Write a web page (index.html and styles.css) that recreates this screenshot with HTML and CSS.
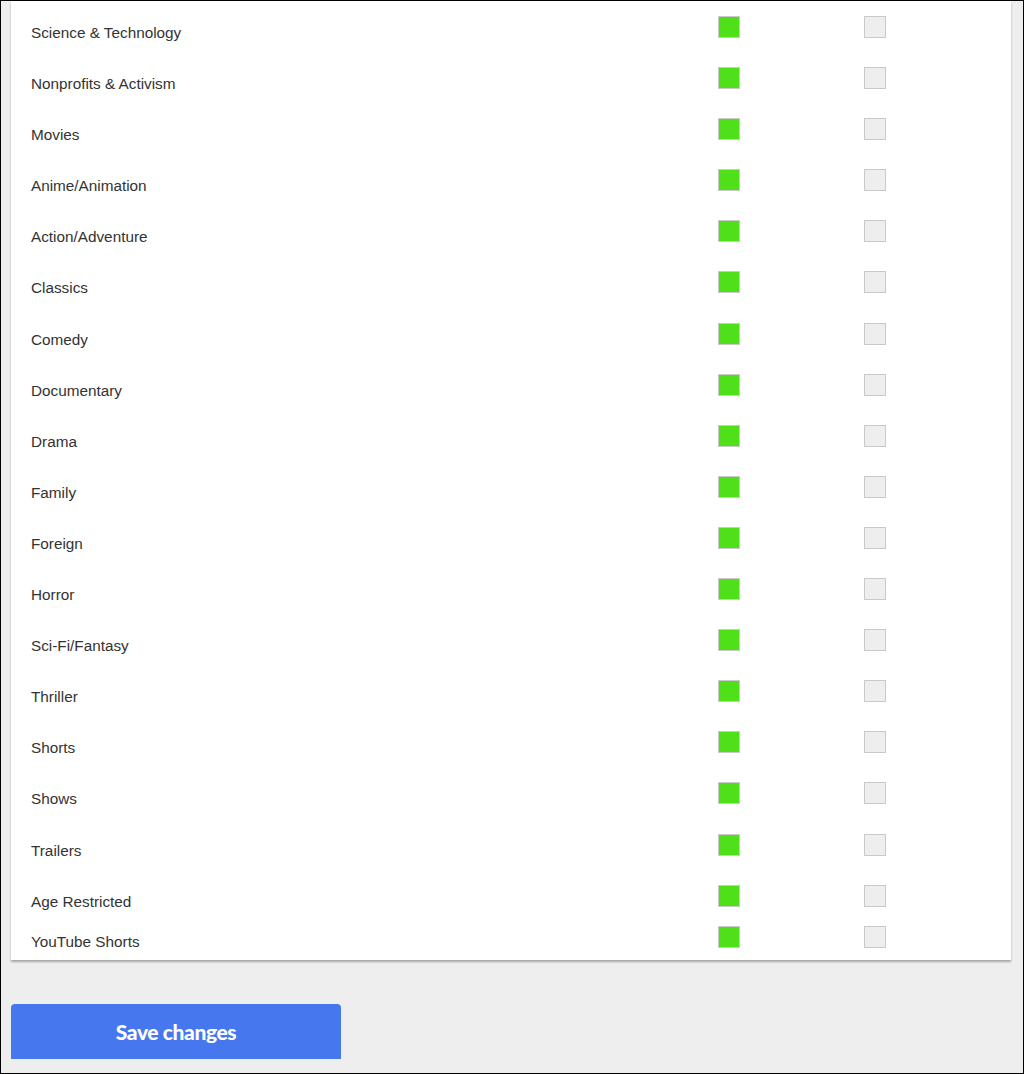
FILE: index.html
```html
<!DOCTYPE html>
<html lang="en">
<head>
  <meta charset="UTF-8">
  <title>Category filters</title>
  <link rel="stylesheet" href="styles.css">
</head>
<body>
  <div class="frame">
    <div class="card">
      <div class="row"><span class="label">Science &amp; Technology</span><span class="box on"></span><span class="box"></span></div>
      <div class="row"><span class="label">Nonprofits &amp; Activism</span><span class="box on"></span><span class="box"></span></div>
      <div class="row"><span class="label">Movies</span><span class="box on"></span><span class="box"></span></div>
      <div class="row"><span class="label">Anime/Animation</span><span class="box on"></span><span class="box"></span></div>
      <div class="row"><span class="label">Action/Adventure</span><span class="box on"></span><span class="box"></span></div>
      <div class="row"><span class="label">Classics</span><span class="box on"></span><span class="box"></span></div>
      <div class="row"><span class="label">Comedy</span><span class="box on"></span><span class="box"></span></div>
      <div class="row"><span class="label">Documentary</span><span class="box on"></span><span class="box"></span></div>
      <div class="row"><span class="label">Drama</span><span class="box on"></span><span class="box"></span></div>
      <div class="row"><span class="label">Family</span><span class="box on"></span><span class="box"></span></div>
      <div class="row"><span class="label">Foreign</span><span class="box on"></span><span class="box"></span></div>
      <div class="row"><span class="label">Horror</span><span class="box on"></span><span class="box"></span></div>
      <div class="row"><span class="label">Sci-Fi/Fantasy</span><span class="box on"></span><span class="box"></span></div>
      <div class="row"><span class="label">Thriller</span><span class="box on"></span><span class="box"></span></div>
      <div class="row"><span class="label">Shorts</span><span class="box on"></span><span class="box"></span></div>
      <div class="row"><span class="label">Shows</span><span class="box on"></span><span class="box"></span></div>
      <div class="row"><span class="label">Trailers</span><span class="box on"></span><span class="box"></span></div>
      <div class="row"><span class="label">Age Restricted</span><span class="box on"></span><span class="box"></span></div>
      <div class="row last"><span class="label">YouTube Shorts</span><span class="box on"></span><span class="box"></span></div>
    </div>

    <button class="save">Save changes</button>
  </div>
</body>
</html>
```

FILE: styles.css
```css
html, body {
  margin: 0;
  padding: 0;
  background-color: #eeeeee;
}

.frame {
  height: 1074px;
  box-sizing: border-box;
  border: 1px solid #000;
  overflow: hidden;
  padding-left: 10px;
}

.card {
  width: 1000px;
  background-color: #fff;
  box-shadow: 0 2px 2px rgba(0, 0, 0, 0.3);
  padding-bottom: 12px;
}

.row {
  display: grid;
  grid-template-columns: 687px 146px 1fr;
  align-items: start;
  height: 51.1px;
  padding-left: 20px;
}

.label {
  font-family: "Liberation Sans", Arial, sans-serif;
  font-size: 15.3px;
  line-height: 17px;
  color: #333;
  padding-top: 23px;
}

.box {
  width: 20px;
  height: 20px;
  margin-top: 15px;
  border: 1px solid #c9c9c9;
  background-color: #eeeeee;
}

.box.on {
  background-color: #50e01a;
}

.row.last {
  height: 27px;
}

.row.last .label {
  padding-top: 12px;
}

.row.last .box {
  margin-top: 5px;
}

.save {
  display: block;
  margin-top: 44px;
  width: 330px;
  height: 55px;
  border: none;
  border-radius: 4px 4px 0 0;
  background-color: #4677ef;
  color: #fff;
  font-family: Lato, "Open Sans", sans-serif;
  font-weight: 900;
  font-size: 21px;
  letter-spacing: -0.4px;
  padding: 0;
  cursor: pointer;
}
```
